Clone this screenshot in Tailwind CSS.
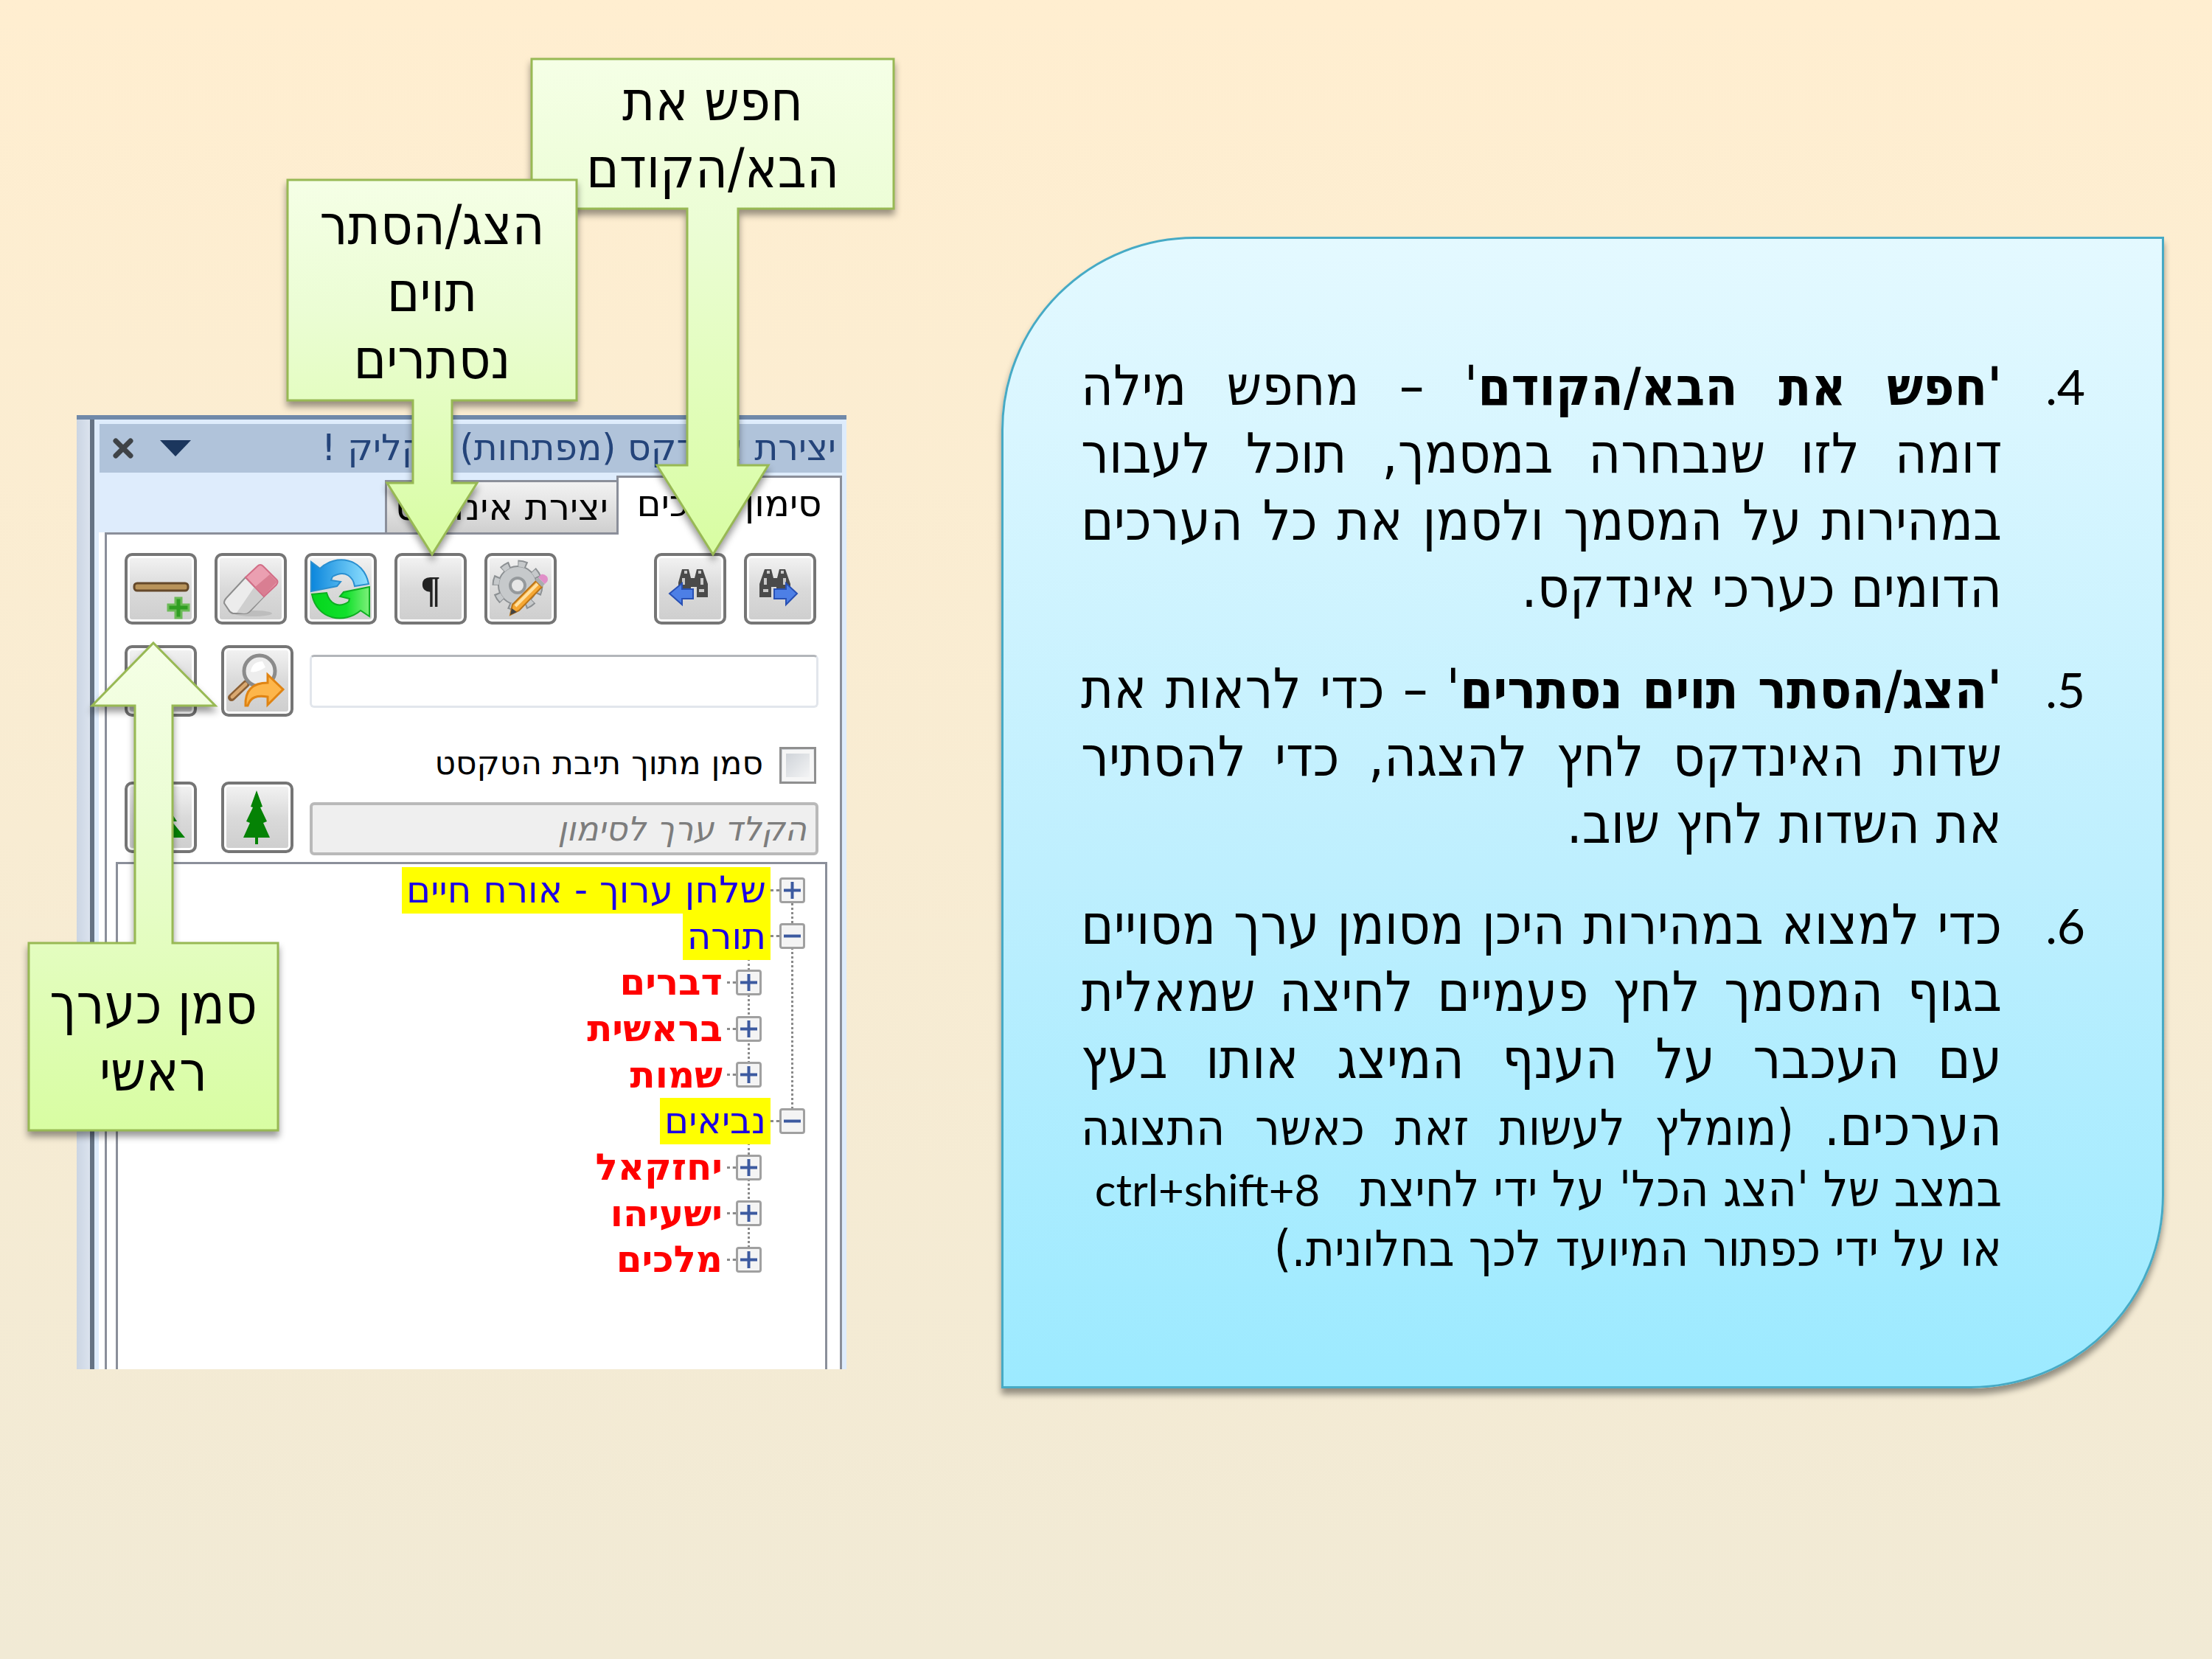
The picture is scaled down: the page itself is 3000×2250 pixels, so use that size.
<!DOCTYPE html>
<html lang="he">
<head>
<meta charset="utf-8">
<title>יצירת אינדקס</title>
<script src="https://cdn.jsdelivr.net/npm/@tailwindcss/browser@4"></script>
</head>
<body class="min-h-screen bg-linear-to-b from-[#ffeed0] to-[#f1ead5] font-['DejaVu_Sans_Condensed','DejaVu_Sans',sans-serif] text-black">
<main class="flex items-start gap-[210px] pr-[65px]">

<section class="relative w-[1148px] shrink-0 pt-[563px] pl-[104px]">
  <!-- task pane -->
  <div class="flex h-[1294px] border-t-[6px] border-[#7089a9] font-['DejaVu_Sans',sans-serif]">
    <div class="w-[18px] bg-linear-to-r from-[#cbd5e3] to-[#dbe3ee]"></div>
    <div class="w-[6px] bg-[#657384]"></div>
    <div class="flex flex-1 flex-col bg-[#deecfc] pt-[6px]">
      <header dir="rtl" class="mr-[6px] ml-[7px] flex h-[66px] items-center justify-between bg-[#b0c3da] pr-2 pl-[18px]">
        <h1 class="text-[49px] leading-[60px] text-[#24447a]">יצירת אינדקס (מפתחות) בקליק !</h1>
        <div class="flex items-center gap-[36px]">
          <button aria-label="תפריט"><svg class="block h-[22px] w-[42px]" viewBox="0 0 42 22"><path d="M0 0H42L21 22Z" fill="#1b365d"/></svg></button>
          <button aria-label="סגור"><svg class="block h-[28px] w-[28px]" viewBox="0 0 28 28"><path d="M4 4L24 24M24 4L4 24" stroke="#3f4347" stroke-width="7" stroke-linecap="round"/></svg></button>
        </div>
      </header>
      <nav dir="rtl" class="relative mr-[6px] flex h-[81px] items-end">
        <button class="relative -mb-[3px] h-[80px] w-[306px] border-[3px] border-b-0 border-[#8b8f9a] bg-white pb-2 text-[50px] leading-[60px]">סימון ערכים</button>
        <button class="h-[71px] w-[314px] border-t-[3px] border-l-[3px] border-[#8b8f9a] bg-linear-to-b from-[#f2f2f2] via-[#e2e2e2] to-[#cfcfcf] text-[50px] leading-[60px]">יצירת אינדקס</button>
      </nav>
      <div class="mr-[6px] ml-[6px] flex flex-1 flex-col bg-white pl-2">
        <div class="flex flex-1 flex-col border-x-[3px] border-t-[3px] border-[#8b8f9a] pt-[25px]">
          <div class="flex justify-between pr-[32px] pl-[24px]">
            <div class="flex gap-[24px]">
              <button aria-label="סמן כערך ראשי" class="h-[97px] w-[98px] rounded-[10px] border-[4px] border-[#757575] bg-linear-to-b from-[#f3f3f3] from-0% via-[#dadada] via-50% to-[#cecece] to-100% ring-[3px] ring-white ring-inset">
                <svg class="block h-[89px] w-[90px]" viewBox="4 4 90 89"><rect x="13" y="41" width="73" height="10" rx="4" fill="#b8935a" stroke="#65492a" stroke-width="3"/><path d="M69 61h8v9h10v8H77v10h-8V78H59v-8h10z" fill="#2f9e22" stroke="#6cba58" stroke-width="3"/></svg></button>
              <button aria-label="מחק" class="h-[97px] w-[98px] rounded-[10px] border-[4px] border-[#757575] bg-linear-to-b from-[#f3f3f3] from-0% via-[#dadada] via-50% to-[#cecece] to-100% ring-[3px] ring-white ring-inset">
                <svg class="block h-[89px] w-[90px]" viewBox="4 4 90 89"><ellipse cx="52" cy="82" rx="26" ry="4" fill="#bdbdbd"/><path d="M42 33L67 59L48 79Q45 82 41 82H25Q21 81 19 77L13 68Q13 64 16 61Z" fill="#ececec" stroke="#8d8d8d" stroke-width="2"/><path d="M56 70L46 80Q44 82 40 82L30 81L54 46L67 59Z" fill="#cfcfcf"/><path d="M58 18Q62 14 66 18L84 36Q87 39 84 43L67 59L42 33Z" fill="#eb9fb1" stroke="#d26d86" stroke-width="2"/><path d="M75 29L85 39L67 58L55 46Z" fill="#d97e92"/></svg></button>
              <button aria-label="רענן" class="h-[97px] w-[98px] rounded-[10px] border-[4px] border-[#757575] bg-linear-to-b from-[#f3f3f3] from-0% via-[#dadada] via-50% to-[#cecece] to-100% ring-[3px] ring-white ring-inset">
                <svg class="block h-[89px] w-[90px]" viewBox="4 4 90 89"><defs><linearGradient id="rb"><stop offset="0" stop-color="#0b86dc"/><stop offset="1" stop-color="#8fe0ff"/></linearGradient><linearGradient id="rg"><stop offset="0" stop-color="#03d61c"/><stop offset=".6" stop-color="#12e02c"/><stop offset="1" stop-color="#7df07a"/></linearGradient></defs><path d="M9 12L21 21C42 1 80 6 87 42L68 45C66 33 56 22 38 32L36 37L49 39L44 45L9 52Z" fill="url(#rb)" stroke="#2a8fd0" stroke-width="2"/><path d="M88 86L76 78C55 96 17 92 10 56L30 54C34 68 45 76 60 66L61 62L48 59L53 53L88 46Z" fill="url(#rg)" stroke="#0fae22" stroke-width="2"/></svg></button>
              <button aria-label="הצג/הסתר תוים נסתרים" class="h-[97px] w-[98px] rounded-[10px] border-[4px] border-[#757575] bg-linear-to-b from-[#f3f3f3] from-0% via-[#dadada] via-50% to-[#cecece] to-100% font-['Liberation_Serif',serif] text-[50px] leading-none font-bold text-[#222] ring-[3px] ring-white ring-inset">¶</button>
              <button aria-label="הגדרות" class="h-[97px] w-[98px] rounded-[10px] border-[4px] border-[#757575] bg-linear-to-b from-[#f3f3f3] from-0% via-[#dadada] via-50% to-[#cecece] to-100% ring-[3px] ring-white ring-inset">
                <svg class="block h-[89px] w-[90px]" viewBox="4 4 90 89"><circle cx="45" cy="44" r="29" fill="none" stroke="#8c9093" stroke-width="11" stroke-dasharray="12 10.8"/><circle cx="45" cy="44" r="26" fill="#c6c9cb" stroke="#8c9093" stroke-width="2"/><circle cx="45" cy="44" r="29" fill="none" stroke="#c6c9cb" stroke-width="7" stroke-dasharray="9 13.8" stroke-dashoffset="-1"/><circle cx="45" cy="44" r="10" fill="#e6e6e6" stroke="#95999c" stroke-width="4"/><path d="M35 84L38 70L70 38L78 46L47 78Z" fill="#f6a733" stroke="#b8741a" stroke-width="2"/><path d="M42 72L72 42" stroke="#ffe0a0" stroke-width="4"/><path d="M35 84L37 75L44 80Z" fill="#444"/><path d="M69 37L73 33L82 42L78 46Z" fill="#a9adb0"/><path d="M73 33L77 29Q81 28 85 32Q87 36 85 39L82 42Z" fill="#e08fc8"/></svg></button>
            </div>
            <div class="flex gap-[24px]">
              <button aria-label="חפש את הקודם" class="h-[97px] w-[98px] rounded-[10px] border-[4px] border-[#757575] bg-linear-to-b from-[#f3f3f3] from-0% via-[#dadada] via-50% to-[#cecece] to-100% ring-[3px] ring-white ring-inset">
                <svg class="block h-[89px] w-[90px]" viewBox="4 4 90 89"><path d="M38 22h9l3 12h5l3-12h8l7 20v18H58V46h-8v10H33V40Z" fill="#4a4a4a"/><path d="M41 26h4M60 26h4M40 34v9M65 34v9M61 51h7" stroke="#c9c9c9" stroke-width="4"/><path d="M21 55L38 41V49H53V62H38V70Z" fill="#4d7fe6" stroke="#2850b4" stroke-width="2"/></svg></button>
              <button aria-label="חפש את הבא" class="h-[97px] w-[98px] rounded-[10px] border-[4px] border-[#757575] bg-linear-to-b from-[#f3f3f3] from-0% via-[#dadada] via-50% to-[#cecece] to-100% ring-[3px] ring-white ring-inset">
                <svg class="block h-[89px] w-[90px]" viewBox="4 4 90 89"><path d="M28 22h9l3 12h5l3-12h8l7 20v14H44V46h-7v14H21V42Z" fill="#4a4a4a"/><path d="M31 26h4M50 26h4M29 34v9M55 34v9M26 51h7" stroke="#c9c9c9" stroke-width="4"/><path d="M72 55L57 41V49H41V62H57V70Z" fill="#4d7fe6" stroke="#2850b4" stroke-width="2"/></svg></button>
            </div>
          </div>

          <div class="mt-[28px] flex gap-[22px] pr-[29px] pl-[24px]">
            <div class="grid grid-cols-[98px_98px] content-start gap-x-[33px] gap-y-[88px]">
              <button aria-label="סמן כערך משני" class="h-[97px] rounded-[10px] border-[4px] border-[#757575] bg-linear-to-b from-[#f3f3f3] from-0% via-[#dadada] via-50% to-[#cecece] to-100% ring-[3px] ring-white ring-inset"></button>
              <button aria-label="חפש" class="h-[97px] rounded-[10px] border-[4px] border-[#757575] bg-linear-to-b from-[#f3f3f3] from-0% via-[#dadada] via-50% to-[#cecece] to-100% ring-[3px] ring-white ring-inset">
                <svg class="block h-[89px] w-[90px]" viewBox="4 4 90 89"><path d="M14 71L34 52" stroke="#8a5f35" stroke-width="10" stroke-linecap="round"/><path d="M15 70L33 53" stroke="#d9a870" stroke-width="5" stroke-linecap="round"/><circle cx="52" cy="35" r="21" fill="#ededed" stroke="#8b8b8b" stroke-width="5"/><path d="M40 36Q42 22 56 22L60 30Q48 38 40 36Z" fill="#fff"/><path d="M33 82C32 62 42 51 63 51V40L84 60L63 81V70C48 68 40 70 36 82Z" fill="#fdb64b" stroke="#e08413" stroke-width="3"/></svg></button>
              <button aria-label="הרחב עץ" class="h-[97px] rounded-[10px] border-[4px] border-[#757575] bg-linear-to-b from-[#f3f3f3] from-0% via-[#dadada] via-50% to-[#cecece] to-100% ring-[3px] ring-white ring-inset">
                <svg class="block h-[89px] w-[90px]" viewBox="4 4 90 89"><path d="M48 12L63 34H58L71 54H64L82 76H51V85H45V76H14L32 54H25L38 34H33Z" fill="#058205"/></svg></button>
              <button aria-label="כווץ עץ" class="h-[97px] rounded-[10px] border-[4px] border-[#757575] bg-linear-to-b from-[#f3f3f3] from-0% via-[#dadada] via-50% to-[#cecece] to-100% ring-[3px] ring-white ring-inset">
                <svg class="block h-[89px] w-[90px]" viewBox="4 4 90 89"><path d="M48 12L56 34L53 35L62 54L57 56L66 76H50V85H46V76H30L39 56L34 54L43 35L40 34Z" fill="#058205"/></svg></button>
            </div>
            <div class="flex flex-1 flex-col pt-[13px]">
              <input aria-label="טקסט" dir="rtl" class="h-[72px] w-full rounded-[6px] border-[3px] border-[#e2e6ec] border-t-[#b3b6ba] bg-white px-4 text-[44px]">
              <label dir="rtl" class="mt-[53px] flex h-[50px] items-start gap-[22px] pr-[3px] text-[44px]">
                <input type="checkbox" class="size-[50px] appearance-none border-[3px] border-[#8f8f8f] bg-linear-to-br from-[#c9ced4] to-[#fafafa] outline-[5px] -outline-offset-[9px] outline-[#f6f6f6]">
                <span class="leading-[44px]">סמן מתוך תיבת הטקסט</span>
              </label>
              <input aria-label="ערך לסימון" dir="rtl" placeholder="הקלד ערך לסימון" class="mt-[25px] h-[72px] w-full rounded-[6px] border-[4px] border-[#b9b9b9] bg-[#efefef] px-3 text-[45px] italic placeholder:text-[#7d7d7d]">
            </div>
          </div>

          <div class="relative mx-[12px] mt-[9px] mr-[17px] flex-1 border-x-[3px] border-t-[3px] border-[#8b8f9a] pt-[4px]">
            <div class="absolute top-[40px] right-[43px] h-[310px] border-r-[3px] border-dotted border-[#8a8a8a]"></div>
            <div class="absolute top-[128px] right-[102px] h-[160px] border-r-[3px] border-dotted border-[#8a8a8a]"></div>
            <div class="absolute top-[378px] right-[102px] h-[160px] border-r-[3px] border-dotted border-[#8a8a8a]"></div>
            <ul dir="rtl" class="relative grid h-[564px] auto-rows-fr text-[50px] leading-[63px]">
              <li class="flex items-center pr-[27px]"><button aria-label="הרחב" class="relative size-[35px] rounded-[4px] border-[3px] border-[#a0a0a0] bg-[#f4f4f4]"><svg class="block" viewBox="0 0 29 29"><path d="M3 14.500H26M14.500 3V26" stroke="#3c5aa0" stroke-width="4"/></svg></button><span class="w-[12px] border-t-[3px] border-dotted border-[#8a8a8a]"></span><a href="#" class="bg-[#ffff00] px-[6px] text-[#1c00e6]">שלחן ערוך - אורח חיים</a></li>
              <li class="flex items-center pr-[27px]"><button aria-label="כווץ" class="relative size-[35px] rounded-[4px] border-[3px] border-[#a0a0a0] bg-[#f4f4f4]"><svg class="block" viewBox="0 0 29 29"><path d="M3 14.500H26" stroke="#3c5aa0" stroke-width="4"/></svg></button><span class="w-[12px] border-t-[3px] border-dotted border-[#8a8a8a]"></span><a href="#" class="bg-[#ffff00] px-[6px] text-[#1c00e6]">תורה</a></li>
              <li class="flex items-center pr-[86px]"><button aria-label="הרחב" class="relative size-[35px] rounded-[4px] border-[3px] border-[#a0a0a0] bg-[#f4f4f4]"><svg class="block" viewBox="0 0 29 29"><path d="M3 14.500H26M14.500 3V26" stroke="#3c5aa0" stroke-width="4"/></svg></button><span class="w-[12px] border-t-[3px] border-dotted border-[#8a8a8a]"></span><a href="#" class="px-[6px] font-bold text-[#ff0000]">דברים</a></li>
              <li class="flex items-center pr-[86px]"><button aria-label="הרחב" class="relative size-[35px] rounded-[4px] border-[3px] border-[#a0a0a0] bg-[#f4f4f4]"><svg class="block" viewBox="0 0 29 29"><path d="M3 14.500H26M14.500 3V26" stroke="#3c5aa0" stroke-width="4"/></svg></button><span class="w-[12px] border-t-[3px] border-dotted border-[#8a8a8a]"></span><a href="#" class="px-[6px] font-bold text-[#ff0000]">בראשית</a></li>
              <li class="flex items-center pr-[86px]"><button aria-label="הרחב" class="relative size-[35px] rounded-[4px] border-[3px] border-[#a0a0a0] bg-[#f4f4f4]"><svg class="block" viewBox="0 0 29 29"><path d="M3 14.500H26M14.500 3V26" stroke="#3c5aa0" stroke-width="4"/></svg></button><span class="w-[12px] border-t-[3px] border-dotted border-[#8a8a8a]"></span><a href="#" class="px-[6px] font-bold text-[#ff0000]">שמות</a></li>
              <li class="flex items-center pr-[27px]"><button aria-label="כווץ" class="relative size-[35px] rounded-[4px] border-[3px] border-[#a0a0a0] bg-[#f4f4f4]"><svg class="block" viewBox="0 0 29 29"><path d="M3 14.500H26" stroke="#3c5aa0" stroke-width="4"/></svg></button><span class="w-[12px] border-t-[3px] border-dotted border-[#8a8a8a]"></span><a href="#" class="bg-[#ffff00] px-[6px] text-[#1c00e6]">נביאים</a></li>
              <li class="flex items-center pr-[86px]"><button aria-label="הרחב" class="relative size-[35px] rounded-[4px] border-[3px] border-[#a0a0a0] bg-[#f4f4f4]"><svg class="block" viewBox="0 0 29 29"><path d="M3 14.500H26M14.500 3V26" stroke="#3c5aa0" stroke-width="4"/></svg></button><span class="w-[12px] border-t-[3px] border-dotted border-[#8a8a8a]"></span><a href="#" class="px-[6px] font-bold text-[#ff0000]">יחזקאל</a></li>
              <li class="flex items-center pr-[86px]"><button aria-label="הרחב" class="relative size-[35px] rounded-[4px] border-[3px] border-[#a0a0a0] bg-[#f4f4f4]"><svg class="block" viewBox="0 0 29 29"><path d="M3 14.500H26M14.500 3V26" stroke="#3c5aa0" stroke-width="4"/></svg></button><span class="w-[12px] border-t-[3px] border-dotted border-[#8a8a8a]"></span><a href="#" class="px-[6px] font-bold text-[#ff0000]">ישעיהו</a></li>
              <li class="flex items-center pr-[86px]"><button aria-label="הרחב" class="relative size-[35px] rounded-[4px] border-[3px] border-[#a0a0a0] bg-[#f4f4f4]"><svg class="block" viewBox="0 0 29 29"><path d="M3 14.500H26M14.500 3V26" stroke="#3c5aa0" stroke-width="4"/></svg></button><span class="w-[12px] border-t-[3px] border-dotted border-[#8a8a8a]"></span><a href="#" class="px-[6px] font-bold text-[#ff0000]">מלכים</a></li>
            </ul>
          </div>
        </div>
      </div>
    </div>
  </div>

  <!-- arrow callouts over the pane -->
  <svg width="0" height="0" class="absolute"><defs><linearGradient id="gc" x1="0" y1="0" x2="0" y2="1"><stop offset="0" stop-color="#f5ffe6"/><stop offset=".35" stop-color="#ebfdd4"/><stop offset="1" stop-color="#d8fda2"/></linearGradient></defs></svg>
  <div class="absolute top-[79px] left-[720px] w-[493px]">
    <svg class="absolute top-0 left-0 h-[675px] w-[493px] overflow-visible drop-shadow-[0_7px_5px_rgba(0,0,0,0.4)]" viewBox="0 0 493 675"><path d="M1 1H492V204H281V552H322L247 673L171 552H212V204H1Z" fill="url(#gc)" stroke="#98b954" stroke-width="3"/></svg>
    <p dir="rtl" class="relative flex h-[204px] items-center justify-center pt-1 text-center text-[75px] leading-[91px]">חפש את<br>הבא/הקודם</p>
  </div>
  <div class="absolute top-[243px] left-[389px] w-[394px]">
    <svg class="absolute top-0 left-0 h-[511px] w-[394px] overflow-visible drop-shadow-[0_7px_5px_rgba(0,0,0,0.4)]" viewBox="0 0 394 511"><path d="M1 1H393V300H224V412H258L197 509L136 412H171V300H1Z" fill="url(#gc)" stroke="#98b954" stroke-width="3"/></svg>
    <p dir="rtl" class="relative flex h-[302px] items-center justify-center pt-1 text-center text-[75px] leading-[91px]">הצג/הסתר<br>תוים<br>נסתרים</p>
  </div>
  <div class="absolute top-[870px] left-[38px] w-[340px] pt-[408px]">
    <svg class="absolute top-0 left-0 h-[664px] w-[340px] overflow-visible drop-shadow-[0_7px_5px_rgba(0,0,0,0.4)]" viewBox="0 0 340 664"><path d="M170 2L254 87H196V409H339V663H1V409H145V87H87Z" fill="url(#gc)" stroke="#98b954" stroke-width="3"/></svg>
    <p dir="rtl" class="relative flex h-[256px] items-center justify-center pt-1 text-center text-[75px] leading-[91px]">סמן כערך<br>ראשי</p>
  </div>
</section>

<article dir="rtl" class="mt-[321px] flex-1 rounded-tl-[262px] rounded-br-[262px] border-[3px] border-[#46aac5] bg-linear-to-b from-[#e4f9ff] from-0% via-[#beeffe] via-55% to-[#9ceaff] to-100% pt-[154px] pr-[104px] pb-[145px] pl-[105px] shadow-[0_8px_8px_rgba(0,0,0,0.4)]">
  <ol class="flex flex-col gap-[46px] text-[75px] leading-[91px]">
    <li class="flex"><span class="w-[113px] shrink-0 font-['Lato',sans-serif] text-[66px]">4.</span><p class="flex-1 text-justify"><b class="text-[72px]">'חפש את הבא/הקודם</b>' – מחפש מילה דומה לזו שנבחרה במסמך, תוכל לעבור במהירות על המסמך ולסמן את כל הערכים הדומים כערכי אינדקס.</p></li>
    <li class="flex"><span class="w-[113px] shrink-0 font-['Lato',sans-serif] text-[66px]">5.</span><p class="flex-1 text-justify"><b class="text-[72px]">'הצג/הסתר תוים נסתרים</b>' – כדי לראות את שדות האינדקס לחץ להצגה, כדי להסתיר את השדות לחץ שוב.</p></li>
    <li class="flex"><span class="w-[113px] shrink-0 font-['Lato',sans-serif] text-[66px]">6.</span><p class="flex-1 text-justify text-[67px] leading-[81px]"><span class="text-[75px] leading-[91px]">כדי למצוא במהירות היכן מסומן ערך מסויים בגוף המסמך לחץ פעמיים לחיצה שמאלית עם העכבר על הענף המיצג אותו בעץ הערכים.</span> (מומלץ לעשות זאת כאשר התצוגה במצב של 'הצג הכל' על ידי לחיצת &nbsp;<span class="font-['Lato',sans-serif] text-[60px]">&nbsp;ctrl+shift+8</span><br>או על ידי כפתור המיועד לכך בחלונית.)</p></li>
  </ol>
</article>
</main>
</body>
</html>
